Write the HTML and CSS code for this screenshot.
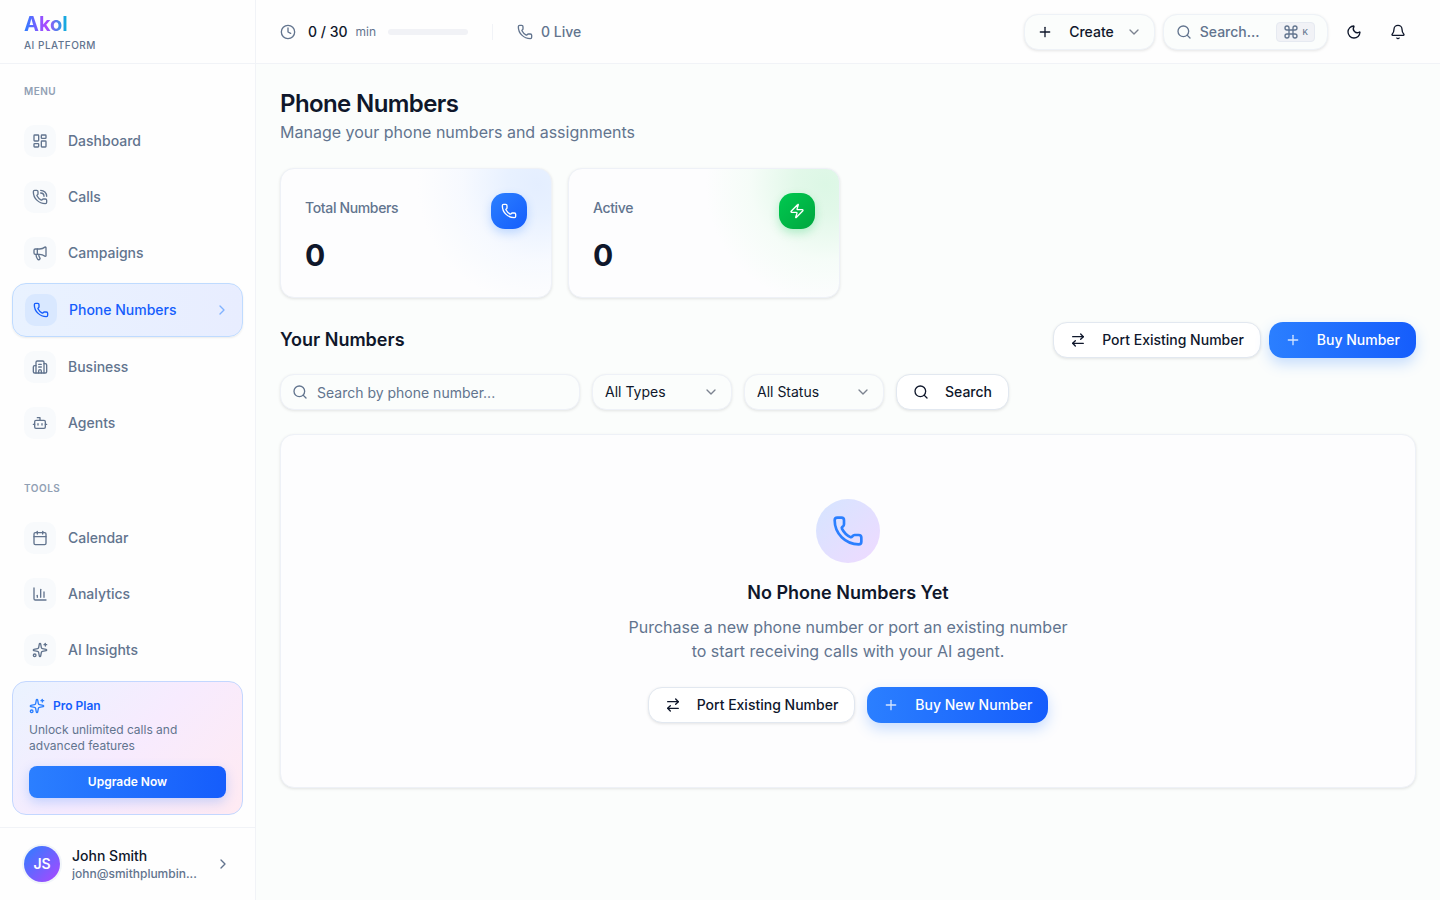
FILE: index.html
```html
<!DOCTYPE html>
<html lang="en">
<head>
    <meta charset="UTF-8">
    <meta name="viewport" content="width=device-width, initial-scale=1.0">
    <title>Phone Numbers - Akol</title>
    <link rel="stylesheet" href="styles.css">
</head>
<body>
    <!-- icon sprite -->
    <svg class="sprite" aria-hidden="true">
        <symbol id="i-dashboard" viewBox="0 0 24 24"><rect x="3" y="3" width="7" height="9" rx="1"/><rect x="14" y="3" width="7" height="5" rx="1"/><rect x="14" y="12" width="7" height="9" rx="1"/><rect x="3" y="16" width="7" height="5" rx="1"/></symbol>
        <symbol id="i-phone" viewBox="0 0 24 24"><path d="M13.832 16.568a1 1 0 0 0 1.213-.303l.355-.465A2 2 0 0 1 17 15h3a2 2 0 0 1 2 2v3a2 2 0 0 1-2 2A18 18 0 0 1 2 4a2 2 0 0 1 2-2h3a2 2 0 0 1 2 2v3a2 2 0 0 1-.8 1.6l-.468.351a1 1 0 0 0-.292 1.233 14 14 0 0 0 6.392 6.384"/></symbol>
        <symbol id="i-call" viewBox="0 0 24 24"><path d="M13 2a9 9 0 0 1 9 9"/><path d="M13 6a5 5 0 0 1 5 5"/><path d="M13.832 16.568a1 1 0 0 0 1.213-.303l.355-.465A2 2 0 0 1 17 15h3a2 2 0 0 1 2 2v3a2 2 0 0 1-2 2A18 18 0 0 1 2 4a2 2 0 0 1 2-2h3a2 2 0 0 1 2 2v3a2 2 0 0 1-.8 1.6l-.468.351a1 1 0 0 0-.292 1.233 14 14 0 0 0 6.392 6.384"/></symbol>
        <symbol id="i-megaphone" viewBox="0 0 24 24"><path d="M11 6a13 13 0 0 0 8.4-2.8A1 1 0 0 1 21 4v12a1 1 0 0 1-1.6.8A13 13 0 0 0 11 14H5a2 2 0 0 1-2-2V8a2 2 0 0 1 2-2z"/><path d="M6 14a12 12 0 0 0 2.4 7.2 2 2 0 0 0 3.2-2.4A8 8 0 0 1 10 14"/><path d="M8 6v8"/></symbol>
        <symbol id="i-building" viewBox="0 0 24 24"><path d="M10 12h4"/><path d="M10 8h4"/><path d="M14 21v-3a2 2 0 0 0-4 0v3"/><path d="M6 10H4a2 2 0 0 0-2 2v7a2 2 0 0 0 2 2h16a2 2 0 0 0 2-2V9a2 2 0 0 0-2-2h-2"/><path d="M6 21V5a2 2 0 0 1 2-2h8a2 2 0 0 1 2 2v16"/></symbol>
        <symbol id="i-bot" viewBox="0 0 24 24"><path d="M12 8V4H8"/><rect x="4" y="8" width="16" height="12" rx="2"/><path d="M2 14h2"/><path d="M20 14h2"/><path d="M15 13v2"/><path d="M9 13v2"/></symbol>
        <symbol id="i-calendar" viewBox="0 0 24 24"><path d="M8 2v4"/><path d="M16 2v4"/><rect x="3" y="4" width="18" height="18" rx="2"/><path d="M3 10h18"/></symbol>
        <symbol id="i-chart" viewBox="0 0 24 24"><path d="M3 3v16a2 2 0 0 0 2 2h16"/><path d="M18 17V9"/><path d="M13 17V5"/><path d="M8 17v-3"/></symbol>
        <symbol id="i-sparkles" viewBox="0 0 24 24"><path d="M11.017 2.814a1 1 0 0 1 1.966 0l1.051 5.558a2 2 0 0 0 1.594 1.594l5.558 1.051a1 1 0 0 1 0 1.966l-5.558 1.051a2 2 0 0 0-1.594 1.594l-1.051 5.558a1 1 0 0 1-1.966 0l-1.051-5.558a2 2 0 0 0-1.594-1.594l-5.558-1.051a1 1 0 0 1 0-1.966l5.558-1.051a2 2 0 0 0 1.594-1.594z"/><path d="M20 2v4"/><path d="M22 4h-4"/><circle cx="4" cy="20" r="2"/></symbol>
        <symbol id="i-right" viewBox="0 0 24 24"><path d="m9 18 6-6-6-6"/></symbol>
        <symbol id="i-down" viewBox="0 0 24 24"><path d="m6 9 6 6 6-6"/></symbol>
        <symbol id="i-clock" viewBox="0 0 24 24"><circle cx="12" cy="12" r="10"/><path d="M12 6v6l4 2"/></symbol>
        <symbol id="i-plus" viewBox="0 0 24 24"><path d="M5 12h14"/><path d="M12 5v14"/></symbol>
        <symbol id="i-search" viewBox="0 0 24 24"><path d="m21 21-4.34-4.34"/><circle cx="11" cy="11" r="8"/></symbol>
        <symbol id="i-command" viewBox="0 0 24 24"><path d="M15 6v12a3 3 0 1 0 3-3H6a3 3 0 1 0 3 3V6a3 3 0 1 0-3 3h12a3 3 0 1 0-3-3"/></symbol>
        <symbol id="i-moon" viewBox="0 0 24 24"><path d="M20.985 12.486a9 9 0 1 1-9.473-9.472c.405-.022.617.46.402.803a6 6 0 0 0 8.268 8.268c.344-.215.825-.004.803.401"/></symbol>
        <symbol id="i-bell" viewBox="0 0 24 24"><path d="M10.268 21a2 2 0 0 0 3.464 0"/><path d="M3.262 15.326A1 1 0 0 0 4 17h16a1 1 0 0 0 .74-1.673C19.41 13.956 18 12.499 18 8A6 6 0 0 0 6 8c0 4.499-1.411 5.956-2.738 7.326"/></symbol>
        <symbol id="i-zap" viewBox="0 0 24 24"><path d="M4 14a1 1 0 0 1-.78-1.63l9.9-10.2a.5.5 0 0 1 .86.46l-1.92 6.02A1 1 0 0 0 13 10h7a1 1 0 0 1 .78 1.63l-9.9 10.2a.5.5 0 0 1-.86-.46l1.92-6.02A1 1 0 0 0 11 14z"/></symbol>
        <symbol id="i-swap" viewBox="0 0 24 24"><path d="m16 3 4 4-4 4"/><path d="M20 7H4"/><path d="m8 21-4-4 4-4"/><path d="M4 17h16"/></symbol>
    </svg>

    <div class="app">
        <aside class="sidebar">
            <div class="brand">
                <span class="brand-name">Akol</span>
                <span class="brand-sub">AI PLATFORM</span>
            </div>

            <nav class="nav">
                <div class="nav-group">
                    <h2 class="nav-label">MENU</h2>
                    <a href="#" class="nav-item"><span class="nav-icon"><svg class="icon"><use href="#i-dashboard"/></svg></span>Dashboard</a>
                    <a href="#" class="nav-item"><span class="nav-icon"><svg class="icon"><use href="#i-call"/></svg></span>Calls</a>
                    <a href="#" class="nav-item"><span class="nav-icon"><svg class="icon"><use href="#i-megaphone"/></svg></span>Campaigns</a>
                    <a href="#" class="nav-item active" aria-current="page"><span class="nav-icon"><svg class="icon"><use href="#i-phone"/></svg></span>Phone Numbers<svg class="icon nav-arrow"><use href="#i-right"/></svg></a>
                    <a href="#" class="nav-item"><span class="nav-icon"><svg class="icon"><use href="#i-building"/></svg></span>Business</a>
                    <a href="#" class="nav-item"><span class="nav-icon"><svg class="icon"><use href="#i-bot"/></svg></span>Agents</a>
                </div>
                <div class="nav-group">
                    <h2 class="nav-label">TOOLS</h2>
                    <a href="#" class="nav-item"><span class="nav-icon"><svg class="icon"><use href="#i-calendar"/></svg></span>Calendar</a>
                    <a href="#" class="nav-item"><span class="nav-icon"><svg class="icon"><use href="#i-chart"/></svg></span>Analytics</a>
                    <a href="#" class="nav-item"><span class="nav-icon"><svg class="icon"><use href="#i-sparkles"/></svg></span>AI Insights</a>
                </div>
            </nav>

            <div class="plan">
                <div class="plan-title"><svg class="icon"><use href="#i-sparkles"/></svg><span>Pro Plan</span></div>
                <p class="plan-text">Unlock unlimited calls and advanced features</p>
                <button type="button" class="plan-btn">Upgrade Now</button>
            </div>

            <div class="account">
                <button type="button" class="account-btn">
                    <span class="avatar">JS</span>
                    <span class="account-info">
                        <span class="account-name">John Smith</span>
                        <span class="account-mail">john@smithplumbin...</span>
                    </span>
                    <svg class="icon"><use href="#i-right"/></svg>
                </button>
            </div>
        </aside>

        <div class="page">
            <header class="topbar">
                <div class="usage">
                    <svg class="icon"><use href="#i-clock"/></svg>
                    <span class="usage-count">0 / 30</span>
                    <span class="usage-unit">min</span>
                    <div class="usage-bar"></div>
                </div>
                <div class="live"><svg class="icon"><use href="#i-phone"/></svg>0 Live</div>

                <div class="topbar-actions">
                    <button type="button" class="pill create"><svg class="icon"><use href="#i-plus"/></svg>Create<svg class="icon faded"><use href="#i-down"/></svg></button>
                    <button type="button" class="pill quick-search"><svg class="icon"><use href="#i-search"/></svg><span>Search...</span><kbd class="kbd"><svg class="icon"><use href="#i-command"/></svg>K</kbd></button>
                    <button type="button" class="icon-btn" aria-label="Toggle dark mode"><svg class="icon"><use href="#i-moon"/></svg></button>
                    <button type="button" class="icon-btn" aria-label="Notifications"><svg class="icon"><use href="#i-bell"/></svg></button>
                </div>
            </header>

            <main class="content">
                <div>
                    <h1>Phone Numbers</h1>
                    <p class="subtitle">Manage your phone numbers and assignments</p>
                </div>

                <div class="stats">
                    <div class="stat stat-blue">
                        <div class="stat-head">
                            <span class="stat-label">Total Numbers</span>
                            <span class="stat-icon"><svg class="icon"><use href="#i-phone"/></svg></span>
                        </div>
                        <div class="stat-value">0</div>
                    </div>
                    <div class="stat stat-green">
                        <div class="stat-head">
                            <span class="stat-label">Active</span>
                            <span class="stat-icon"><svg class="icon"><use href="#i-zap"/></svg></span>
                        </div>
                        <div class="stat-value">0</div>
                    </div>
                </div>

                <section class="numbers">
                    <div class="section-head">
                        <h2 class="section-title">Your Numbers</h2>
                        <div class="section-actions">
                            <button type="button" class="btn"><svg class="icon"><use href="#i-swap"/></svg>Port Existing Number</button>
                            <button type="button" class="btn btn-primary"><svg class="icon"><use href="#i-plus"/></svg>Buy Number</button>
                        </div>
                    </div>

                    <form class="filters">
                        <div class="search-field">
                            <svg class="icon"><use href="#i-search"/></svg>
                            <input type="text" placeholder="Search by phone number..." aria-label="Search by phone number">
                        </div>
                        <div class="select-field">
                            <select aria-label="Type">
                                <option>All Types</option>
                            </select>
                            <svg class="icon"><use href="#i-down"/></svg>
                        </div>
                        <div class="select-field">
                            <select aria-label="Status">
                                <option>All Status</option>
                            </select>
                            <svg class="icon"><use href="#i-down"/></svg>
                        </div>
                        <button type="button" class="btn"><svg class="icon"><use href="#i-search"/></svg>Search</button>
                    </form>
                </section>

                <section class="empty">
                    <div class="empty-icon"><svg class="icon icon-lg"><use href="#i-phone"/></svg></div>
                    <h3>No Phone Numbers Yet</h3>
                    <p>Purchase a new phone number or port an existing number to start receiving calls with your AI agent.</p>
                    <div class="empty-actions">
                        <button type="button" class="btn"><svg class="icon"><use href="#i-swap"/></svg>Port Existing Number</button>
                        <button type="button" class="btn btn-primary"><svg class="icon"><use href="#i-plus"/></svg>Buy New Number</button>
                    </div>
                </section>
            </main>
        </div>
    </div>
</body>
</html>
```
FILE: styles.css
```css
* {
    box-sizing: border-box;
    margin: 0;
    padding: 0;
}
body {
    font-family: Inter, sans-serif;
    font-size: 14px;
    line-height: 20px;
    color: #0f172b;
    background-color: #fbfdfc;
}
button, input, select {
    font: inherit;
    color: inherit;
}
button {
    cursor: pointer;
}
a {
    text-decoration: none;
}
.sprite {
    position: absolute;
    width: 0;
    height: 0;
}
.icon {
    width: 16px;
    height: 16px;
    flex-shrink: 0;
    fill: none;
    stroke: currentColor;
    stroke-width: 2;
    stroke-linecap: round;
    stroke-linejoin: round;
}
.icon-lg {
    width: 32px;
    height: 32px;
}
.app {
    display: flex;
    height: 100vh;
}

/* Sidebar */
.sidebar {
    display: flex;
    flex-direction: column;
    width: 256px;
    flex-shrink: 0;
    background-color: #fefefe;
    border-right: 1px solid #f1f3f7;
}
.brand {
    display: flex;
    flex-direction: column;
    align-items: flex-start;
    justify-content: center;
    height: 64px;
    flex-shrink: 0;
    padding: 0 24px;
    border-bottom: 1px solid #f1f3f7;
}
.brand-name {
    font-size: 20px;
    font-weight: 700;
    line-height: 28px;
    color: transparent;
    background: linear-gradient(90deg, #2b7fff, #ad46ff 50%, #00b8db);
    -webkit-background-clip: text;
    background-clip: text;
}
.brand-sub {
    font-size: 10px;
    font-weight: 500;
    line-height: 15px;
    letter-spacing: 0.5px;
    color: #62748e;
}
.nav {
    display: flex;
    flex-direction: column;
    gap: 24px;
    flex: 1;
    min-height: 0;
    padding: 12px;
    overflow: hidden;
}
.nav-group {
    display: flex;
    flex-direction: column;
    gap: 4px;
}
.nav-label {
    padding: 8px 12px;
    margin-bottom: 4px;
    font-size: 10px;
    font-weight: 600;
    line-height: 15px;
    letter-spacing: 0.5px;
    color: #91a0b4;
}
.nav-item {
    display: flex;
    align-items: center;
    gap: 12px;
    padding: 10px 12px;
    border-radius: 14px;
    font-weight: 500;
    color: #62748e;
}
.nav-icon {
    display: flex;
    align-items: center;
    justify-content: center;
    width: 32px;
    height: 32px;
    border-radius: 10px;
    background-color: #f8fafc;
}
.nav-item.active {
    color: #155dfc;
    background: linear-gradient(90deg, #e9f2ff, #e8edff);
    border: 1px solid #bfdbff;
    box-shadow: 0 1px 2px rgba(0, 0, 0, 0.08);
}
.nav-item.active .nav-icon {
    background-color: #d9e8ff;
}
.nav-arrow {
    margin-left: auto;
    color: #80b2ff;
}
.plan {
    margin: 0 12px 12px;
    padding: 16px;
    border: 1px solid #c3d7ff;
    border-radius: 14px;
    background: linear-gradient(135deg, #eaf3ff, #f7ebfe 50%, #ffeaf2);
}
.plan-title {
    display: flex;
    align-items: center;
    gap: 8px;
    margin-bottom: 8px;
    font-size: 12px;
    font-weight: 600;
    line-height: 16px;
    color: #155dfc;
}
.plan-title .icon {
    color: #2b7fff;
}
.plan-text {
    margin-bottom: 12px;
    font-size: 12px;
    line-height: 16px;
    color: #62748e;
}
.plan-btn {
    display: block;
    width: 100%;
    height: 32px;
    border: none;
    border-radius: 8px;
    font-size: 12px;
    font-weight: 600;
    color: white;
    background: linear-gradient(90deg, #2b7fff, #155dfc);
    box-shadow: 0 4px 12px rgba(43, 127, 255, 0.25);
}
.account {
    padding: 12px;
    border-top: 1px solid #f1f3f7;
}
.account-btn {
    display: flex;
    align-items: center;
    gap: 12px;
    width: 100%;
    height: 48px;
    padding: 0 12px;
    border: none;
    background: none;
    text-align: left;
}
.account-btn .icon {
    color: #62748e;
}
.avatar {
    display: flex;
    align-items: center;
    justify-content: center;
    width: 36px;
    height: 36px;
    flex-shrink: 0;
    border-radius: 50%;
    font-weight: 600;
    color: white;
    background: linear-gradient(135deg, #2b7fff, #ad46ff);
    box-shadow: 0 0 0 2px #f1f5f9;
}
.account-info {
    display: flex;
    flex-direction: column;
    flex: 1;
    min-width: 0;
    font-weight: 500;
}
.account-mail {
    overflow: hidden;
    font-size: 12px;
    line-height: 16px;
    text-overflow: ellipsis;
    white-space: nowrap;
    color: #62748e;
}

/* Top bar */
.page {
    flex: 1;
    min-width: 0;
}
.topbar {
    display: flex;
    align-items: center;
    height: 64px;
    padding: 0 24px;
    background-color: #fefefe;
    border-bottom: 1px solid #f1f3f7;
}
.usage {
    display: flex;
    align-items: center;
    color: #62748e;
}
.usage-count {
    margin-left: 12px;
    font-weight: 500;
    color: #0f172b;
}
.usage-unit {
    margin: 0 12px 0 8px;
    font-size: 12px;
}
.usage-bar {
    width: 80px;
    height: 6px;
    border-radius: 3px;
    background-color: #f1f2f6;
}
.live {
    display: flex;
    align-items: center;
    gap: 8px;
    height: 16px;
    margin-left: 24px;
    padding-left: 24px;
    border-left: 1px solid #f1f3f7;
    font-weight: 500;
    color: #62748e;
}
.topbar-actions {
    display: flex;
    align-items: center;
    gap: 8px;
    margin-left: auto;
}
.pill {
    display: flex;
    align-items: center;
    height: 36px;
    padding: 0 12px;
    border: 1px solid #eef2f7;
    border-radius: 14px;
    background-color: #fbfdfc;
    font-weight: 500;
    box-shadow: 0 1px 3px rgba(0, 0, 0, 0.1);
}
.create {
    gap: 16px;
}
.create .faded {
    margin-left: -4px;
    color: #7c8390;
}
.quick-search {
    gap: 8px;
    color: #62748e;
}
.kbd {
    display: flex;
    align-items: center;
    gap: 4px;
    height: 20px;
    margin-left: 8px;
    padding: 0 6px;
    border: 1px solid #e6eaf1;
    border-radius: 4px;
    background-color: #f1f2f6;
    font-family: Inter, sans-serif;
    font-size: 8px;
    line-height: 16px;
}
.icon-btn {
    display: flex;
    align-items: center;
    justify-content: center;
    width: 36px;
    height: 36px;
    border: none;
    background: none;
}

/* Page content */
.content {
    display: flex;
    flex-direction: column;
    gap: 24px;
    padding: 24px;
}
h1 {
    font-size: 24px;
    font-weight: 600;
    line-height: 32px;
    letter-spacing: -0.025em;
}
.subtitle {
    font-size: 16px;
    line-height: 24px;
    color: #62748e;
}
.stats {
    display: grid;
    grid-template-columns: repeat(4, 1fr);
    gap: 16px;
}
.stat {
    padding: 24px;
    border: 1px solid #eef1f7;
    border-radius: 14px;
    background-color: #fdfdfe;
    box-shadow: 0 1px 3px rgba(0, 0, 0, 0.1);
}
.stat-blue {
    background-image: radial-gradient(circle at 95% 12%, #e4eeff, #e8f1ff 30px, rgba(244, 248, 255, 0.7) 75px, rgba(253, 253, 254, 0) 120px);
}
.stat-green {
    background-image: radial-gradient(circle at 95% 12%, #dcf7e5, #e2f8e9 30px, rgba(242, 252, 245, 0.7) 75px, rgba(253, 253, 254, 0) 120px);
}
.stat-head {
    display: flex;
    justify-content: space-between;
    align-items: flex-start;
    margin-bottom: 8px;
}
.stat-label {
    font-weight: 500;
    line-height: 30px;
    letter-spacing: -0.025em;
    color: #62748e;
}
.stat-icon {
    display: flex;
    align-items: center;
    justify-content: center;
    width: 36px;
    height: 36px;
    border-radius: 14px;
    color: white;
}
.stat-blue .stat-icon {
    background: linear-gradient(135deg, #2b7fff, #155dfc);
    box-shadow: 0 4px 10px rgba(43, 127, 255, 0.25);
}
.stat-green .stat-icon {
    background: linear-gradient(135deg, #00c950, #00a63e);
    box-shadow: 0 4px 10px rgba(0, 201, 80, 0.25);
}
.stat-value {
    font-size: 30px;
    font-weight: 700;
    line-height: 36px;
}
.numbers {
    display: flex;
    flex-direction: column;
    gap: 16px;
}
.section-head {
    display: flex;
    align-items: center;
    justify-content: space-between;
}
.section-title {
    font-size: 18px;
    font-weight: 600;
    line-height: 28px;
}
.section-actions {
    display: flex;
    gap: 8px;
}
.btn {
    display: flex;
    align-items: center;
    gap: 16px;
    height: 36px;
    padding: 0 16px;
    border: 1px solid #e2e8f0;
    border-radius: 14px;
    font-weight: 500;
    background-color: white;
    box-shadow: 0 1px 3px rgba(0, 0, 0, 0.1);
}
.btn-primary {
    border: none;
    color: white;
    background: linear-gradient(90deg, #2b7fff, #155dfc);
    box-shadow: 0 6px 14px rgba(43, 127, 255, 0.25);
}
.btn-primary .icon {
    opacity: 0.8;
}
.filters {
    display: flex;
    gap: 12px;
}
.search-field, .select-field {
    position: relative;
}
.search-field {
    width: 300px;
}
.select-field {
    width: 140px;
}
.search-field input, .select-field select {
    width: 100%;
    height: 36px;
    padding: 0 12px;
    border: 1px solid #eef1f7;
    border-radius: 14px;
    background-color: #fbfdfc;
    box-shadow: 0 1px 3px rgba(0, 0, 0, 0.1);
    appearance: none;
}
.search-field input {
    padding-left: 36px;
}
.search-field input::placeholder {
    color: #62748e;
}
.search-field .icon, .select-field .icon {
    position: absolute;
    top: 10px;
    pointer-events: none;
}
.search-field .icon {
    left: 12px;
    color: #62748e;
}
.select-field .icon {
    right: 13px;
    color: #7c8390;
}
.empty {
    display: flex;
    flex-direction: column;
    align-items: center;
    padding: 64px 24px;
    border: 1px solid #eef1f7;
    border-radius: 14px;
    background-color: #fdfdfe;
    box-shadow: 0 1px 3px rgba(0, 0, 0, 0.1);
    text-align: center;
}
.empty-icon {
    display: flex;
    align-items: center;
    justify-content: center;
    width: 64px;
    height: 64px;
    margin-bottom: 16px;
    border-radius: 50%;
    color: #2b7fff;
    background: linear-gradient(135deg, #d5e5ff, #efdaff);
}
.empty h3 {
    margin-bottom: 8px;
    font-size: 18px;
    font-weight: 600;
    line-height: 28px;
}
.empty p {
    max-width: 448px;
    margin-bottom: 24px;
    font-size: 16px;
    line-height: 24px;
    color: #62748e;
}
.empty-actions {
    display: flex;
    gap: 12px;
}
```
